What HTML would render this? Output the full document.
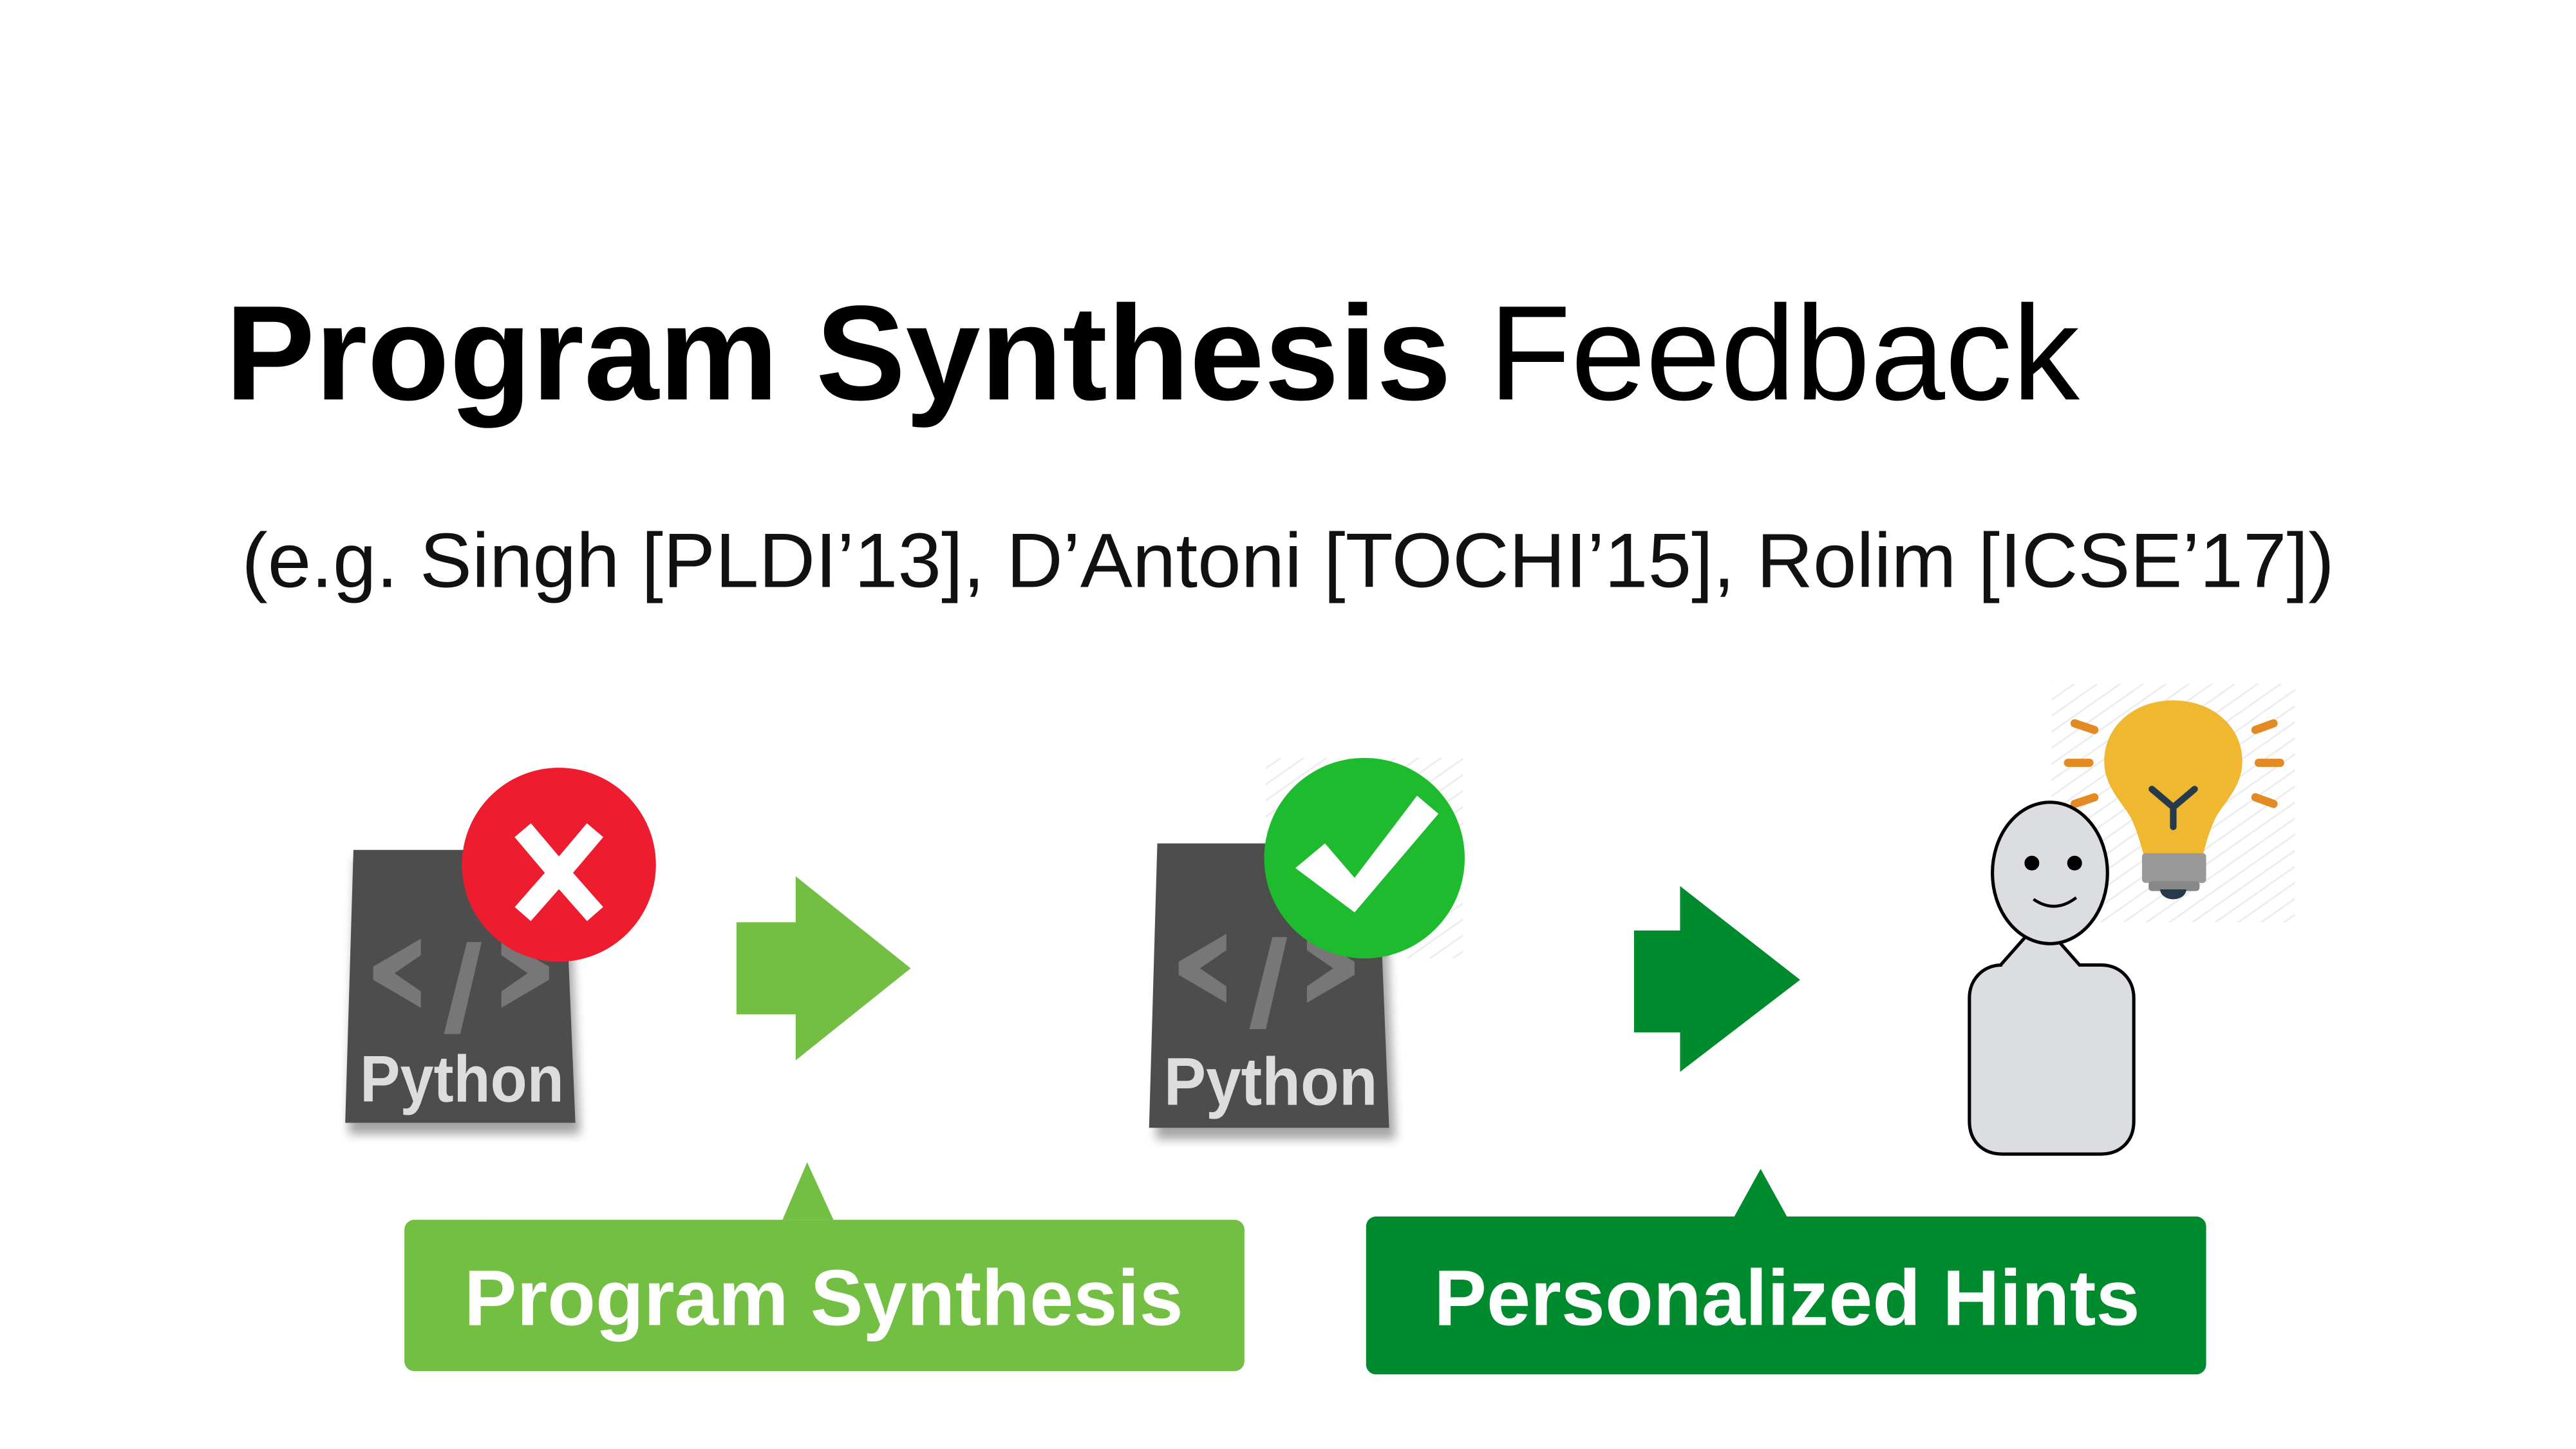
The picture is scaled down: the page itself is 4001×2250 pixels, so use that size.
<!DOCTYPE html>
<html><head><meta charset="utf-8"><style>
html,body{margin:0;padding:0;background:#fff;}
svg{display:block;}
</style></head><body>
<svg width="4001" height="2250" viewBox="0 0 1567 881.4" preserveAspectRatio="none" xmlns="http://www.w3.org/2000/svg" font-family="Liberation Sans, Arial, sans-serif">
<defs>
<pattern id="hatch" width="8" height="8" patternUnits="userSpaceOnUse" patternTransform="rotate(-35)">
<rect width="8" height="8" fill="#fff"/><line x1="0" y1="0" x2="8" y2="0" stroke="#ececec" stroke-width="2"/>
</pattern>
<filter id="sh" x="-20%" y="-20%" width="140%" height="140%"><feGaussianBlur stdDeviation="3"/></filter>
</defs>
<rect width="1600" height="900" fill="#fff"/>

<text x="137" y="243" font-size="82" fill="#000" textLength="1128" lengthAdjust="spacingAndGlyphs"><tspan font-weight="bold">Program Synthesis</tspan> Feedback</text>
<text x="147" y="357" font-size="47" fill="#111" textLength="1273" lengthAdjust="spacingAndGlyphs">(e.g. Singh [PLDI’13], D’Antoni [TOCHI’15], Rolim [ICSE’17])</text>

<!-- doc 1 -->
<polygon points="216,522 346,522 353,690 212,690" fill="#000" opacity="0.35" filter="url(#sh)"/>
<polygon points="215,517 343,517 350,683 210,683" fill="#4d4d4d"/>
<path d="M256,571 L256,581 L240,592 L256,603 L256,613 L227,596 L227,588 Z" fill="#777"/>
<path d="M284,573 L293,573 L280,629 L270,629 Z" fill="#777"/>
<path d="M305,571 L305,581 L321,592 L305,603 L305,613 L334,596 L334,588 Z" fill="#777"/>
<text x="219" y="670" font-size="40" font-weight="bold" fill="#ddd" textLength="124" lengthAdjust="spacingAndGlyphs">Python</text>
<circle cx="340" cy="526" r="59" fill="#ed1c2e"/>
<path d="M318,505 L340,531 L362,505 M318,556 L340,531 L362,556" stroke="#fff" stroke-width="13" fill="none"/>

<!-- arrow 1 -->
<path d="M448,561 L484,561 L484,533 L554,589 L484,645 L484,617 L448,617 Z" fill="#72bf44"/>

<!-- doc 2 -->
<rect x="770" y="461" width="120" height="122" fill="url(#hatch)"/>
<polygon points="709,518 842,518 849,693 703,693" fill="#000" opacity="0.35" filter="url(#sh)"/>
<polygon points="704,513 838,513 845,686 699,686" fill="#4d4d4d"/>
<path d="M746,568 L746,578 L730,589 L746,600 L746,610 L717,593 L717,585 Z" fill="#777"/>
<path d="M774,570 L783,570 L770,626 L760,626 Z" fill="#777"/>
<path d="M795,568 L795,578 L811,589 L795,600 L795,610 L824,593 L824,585 Z" fill="#777"/>
<text x="708" y="672" font-size="41" font-weight="bold" fill="#ddd" textLength="130" lengthAdjust="spacingAndGlyphs">Python</text>
<circle cx="830" cy="522" r="61" fill="#1dbb2d"/>
<path d="M788,528 L806,513 L824,534 L862,484 L875,495 L824,555 Z" fill="#fff"/>

<!-- arrow 2 -->
<path d="M994,566 L1022,566 L1022,539 L1095,596 L1022,652 L1022,628 L994,628 Z" fill="#008a2e"/>

<!-- bulb -->
<rect x="1248" y="416" width="148" height="145" fill="url(#hatch)"/>
<g stroke="#e38a25" stroke-width="5" stroke-linecap="round">
<line x1="1262" y1="440" x2="1274" y2="444"/><line x1="1258" y1="464" x2="1271" y2="464"/><line x1="1262" y1="489" x2="1274" y2="485"/>
<line x1="1372" y1="444" x2="1383" y2="440"/><line x1="1374" y1="464" x2="1387" y2="464"/><line x1="1372" y1="485" x2="1383" y2="489"/>
</g>
<path d="M1322,426 C1298,426 1280,442 1280,463 C1280,478 1290,487 1296,497 C1300,505 1302,513 1304,520 L1340,520 C1342,513 1344,505 1348,497 C1354,487 1364,478 1364,463 C1364,442 1346,426 1322,426 Z" fill="#f0b731"/>
<rect x="1303" y="519" width="39" height="18" rx="2" fill="#999"/>
<rect x="1307" y="536" width="31" height="6" rx="2" fill="#888"/>
<path d="M1314,541 A8,6 0 0 0 1330,541 Z" fill="#263a4c"/>
<path d="M1309,480 L1322,491 L1335,480 M1322,491 L1322,503" stroke="#263a4c" stroke-width="4" stroke-linecap="round" fill="none"/>

<!-- person -->
<path d="M1232,570 L1217,587 L1218,587 C1206,587 1198,596 1198,607 L1198,682 C1198,694 1206,702 1218,702 L1278,702 C1290,702 1298,694 1298,682 L1298,607 C1298,596 1290,587 1278,587 L1265,587 L1250,570 Z" fill="#dcdde0" stroke="#000" stroke-width="2"/>
<ellipse cx="1247" cy="531" rx="35" ry="43" fill="#dcdde0" stroke="#000" stroke-width="2"/>
<circle cx="1236" cy="525" r="4.5" fill="#000"/>
<circle cx="1262" cy="525" r="4.5" fill="#000"/>
<path d="M1237,547 Q1250,556 1263,546" stroke="#000" stroke-width="1.8" fill="none"/>

<!-- labels -->
<path d="M476,742 L491,707 L507,742 Z" fill="#72bf44"/>
<rect x="246" y="742" width="511" height="92" rx="6" fill="#72bf44"/>
<text x="501" y="806" font-size="48" font-weight="bold" fill="#fff" text-anchor="middle">Program Synthesis</text>
<path d="M1055,740 L1071,711 L1087,740 Z" fill="#008a2e"/>
<rect x="831" y="740" width="511" height="96" rx="6" fill="#008a2e"/>
<text x="1087" y="806" font-size="48" font-weight="bold" fill="#fff" text-anchor="middle">Personalized Hints</text>
</svg>
</body></html>
